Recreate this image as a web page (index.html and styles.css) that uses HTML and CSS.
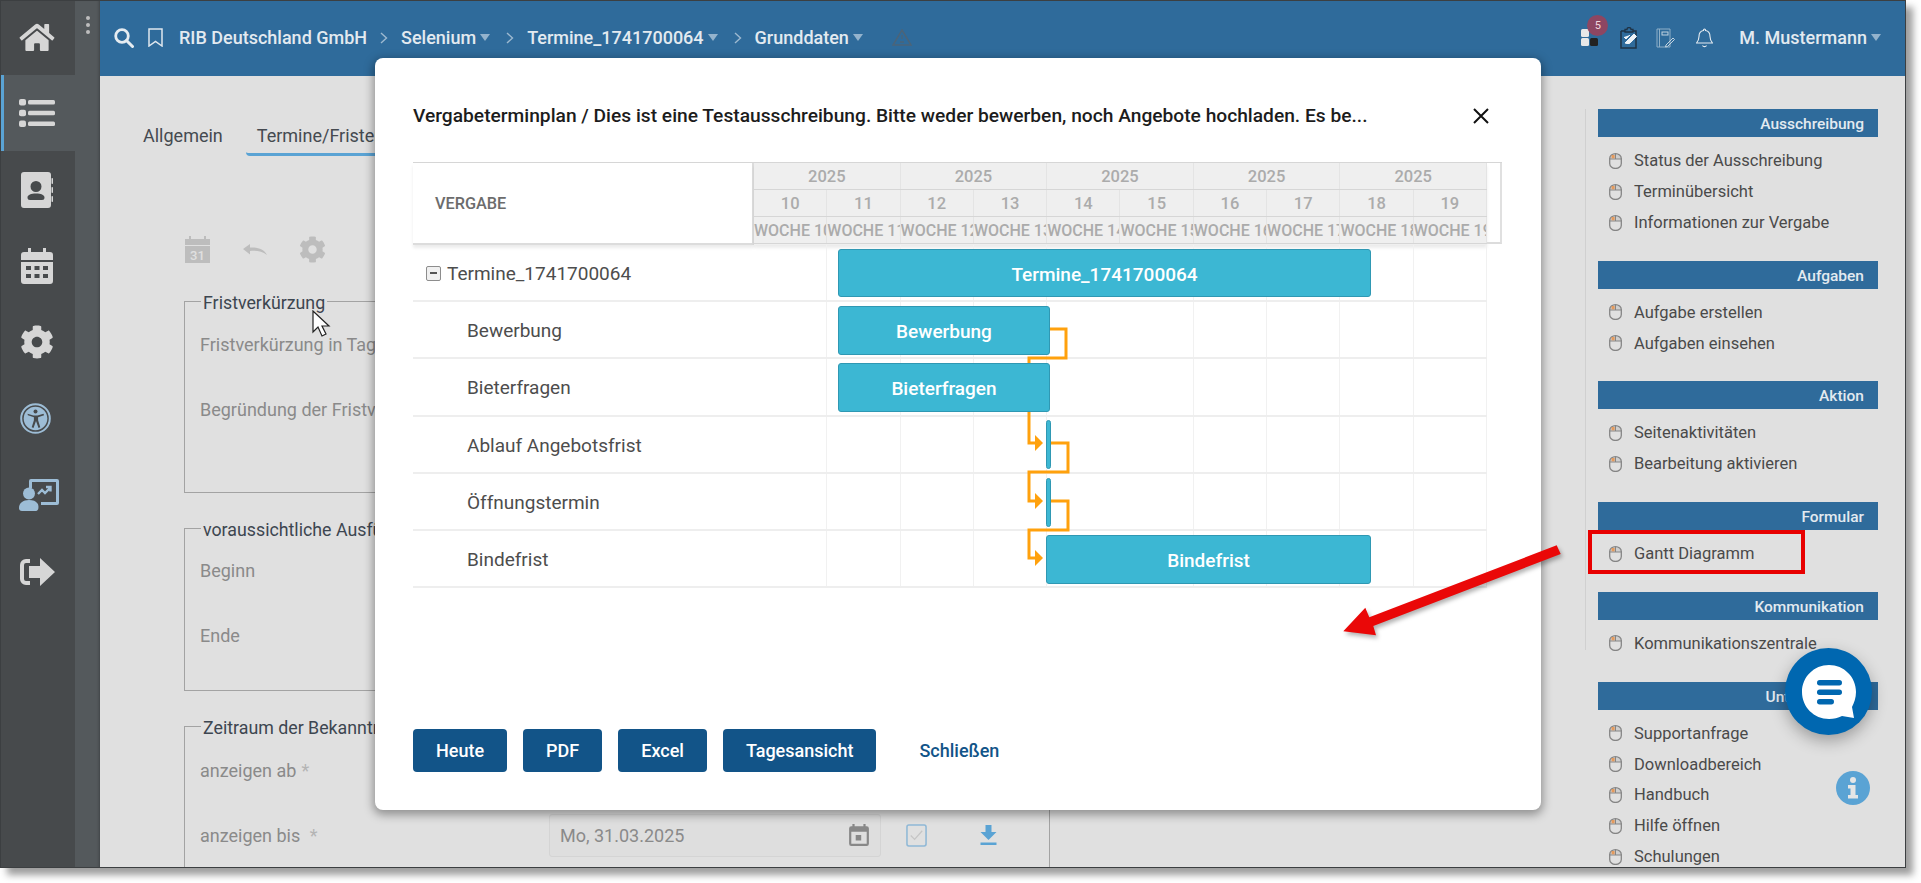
FILE: index.html
```html
<!DOCTYPE html>
<html lang="de">
<head>
<meta charset="utf-8">
<title>Vergabeterminplan</title>
<link rel="stylesheet" href="styles.css">
</head>
<body>
<svg class="defs" width="0" height="0" aria-hidden="true">
  <symbol id="mouse" viewBox="0 0 13 16">
    <path d="M.7 6a5.800 5.300 0 0 1 11.600 0z" fill="#cfcfcf"/>
    <path d="M.7 5.500a5.800 4.800 0 0 1 11.600 0v5a5.800 5 0 0 1-11.600 0z" fill="none" stroke="#858585" stroke-width="1.300"/>
    <path d="M.7 6h11.600M6.500 .8V6" fill="none" stroke="#858585" stroke-width="1"/>
    <rect x="2.600" y="2" width="3" height="3.300" fill="#e59a5c"/>
  </symbol>
</svg>
<div class="frame">
  <nav class="rail">
    <div class="rail-icons">
      <a class="rail-item"><svg class="ico-home" viewBox="0 0 576 512"><path d="M280.37 148.26L96 300.11V464a16 16 0 0 0 16 16l112.06-.29a16 16 0 0 0 15.92-16V368a16 16 0 0 1 16-16h64a16 16 0 0 1 16 16v95.64a16 16 0 0 0 16 16.05L464 480a16 16 0 0 0 16-16V300L295.67 148.26a12.19 12.19 0 0 0-15.3 0zM571.6 251.47L488 182.56V44.05a12 12 0 0 0-12-12h-56a12 12 0 0 0-12 12v72.61L318.47 43a48 48 0 0 0-61 0L4.34 251.47a12 12 0 0 0-1.6 16.9l25.5 31A12 12 0 0 0 45.15 301l235.22-193.74a12.19 12.19 0 0 1 15.3 0L530.9 301a12 12 0 0 0 16.9-1.6l25.5-31a12 12 0 0 0-1.7-16.93z"/></svg></a>
      <a class="rail-item rail-active"><svg class="ico-36" viewBox="0 0 36 28"><rect x="0" y="0" width="7" height="6.500" rx="2"/><rect x="0" y="10.700" width="7" height="6.500" rx="2"/><rect x="0" y="21.500" width="7" height="6.500" rx="2"/><rect x="9" y="1" width="27" height="4.500" rx="1.500"/><rect x="9" y="11.700" width="27" height="4.500" rx="1.500"/><rect x="9" y="22.500" width="27" height="4.500" rx="1.500"/></svg></a>
      <a class="rail-item"><svg class="ico-32" viewBox="0 0 32 36"><path fill-rule="evenodd" d="M3 0h24a3 3 0 0 1 3 3v30a3 3 0 0 1-3 3H3a3 3 0 0 1-3-3V3a3 3 0 0 1 3-3zm12 9a5.500 5.500 0 1 0 0 11 5.500 5.500 0 0 0 0-11zm-6 19h12a2.500 2.500 0 0 0 2.500-2.500C23.500 23 20 21.500 15 21.500S6.500 23 6.500 25.500A2.500 2.500 0 0 0 9 28z"/><rect x="30.500" y="6" width="1.500" height="6" rx=".7"/><rect x="30.500" y="15" width="1.500" height="6" rx=".7"/><rect x="30.500" y="24" width="1.500" height="6" rx=".7"/></svg></a>
      <a class="rail-item"><svg class="ico-32" viewBox="0 0 32 36"><path fill-rule="evenodd" d="M7 0h3v4h12V0h3v4h4a3 3 0 0 1 3 3v5H0V7a3 3 0 0 1 3-3h4zM0 14h32v19a3 3 0 0 1-3 3H3a3 3 0 0 1-3-3zm5 4v4h5v-4zm8.500 0v4h5v-4zm8.500 0v4h5v-4zM5 26v4h5v-4zm8.500 0v4h5v-4zm8.500 0v4h5v-4z"/></svg></a>
      <a class="rail-item"><svg class="ico-34" viewBox="0 0 512 512"><path d="M487.4 315.7l-42.6-24.6c4.3-23.2 4.3-47 0-70.2l42.6-24.6c4.9-2.8 7.1-8.6 5.5-14-11.1-35.6-30-67.8-54.7-94.6-3.8-4.1-10-5.1-14.8-2.3L380.8 110c-17.9-15.4-38.5-27.3-60.8-35.1V25.8c0-5.6-3.9-10.5-9.4-11.7-36.7-8.2-74.3-7.8-109.2 0-5.5 1.2-9.4 6.1-9.4 11.7V75c-22.2 7.9-42.8 19.8-60.8 35.1L88.7 85.5c-4.9-2.8-11-1.9-14.8 2.3-24.7 26.7-43.6 58.9-54.7 94.6-1.7 5.4.6 11.2 5.5 14L67.3 221c-4.3 23.2-4.3 47 0 70.2l-42.6 24.6c-4.9 2.8-7.1 8.6-5.5 14 11.1 35.6 30 67.8 54.7 94.6 3.8 4.1 10 5.1 14.8 2.3l42.6-24.6c17.9 15.4 38.5 27.3 60.8 35.1v49.2c0 5.6 3.9 10.5 9.4 11.7 36.7 8.2 74.3 7.8 109.2 0 5.5-1.2 9.4-6.1 9.4-11.7v-49.2c22.2-7.9 42.8-19.8 60.8-35.1l42.6 24.6c4.9 2.8 11 1.9 14.8-2.3 24.7-26.7 43.6-58.9 54.7-94.6 1.5-5.5-.7-11.3-5.6-14.1zM256 336c-44.1 0-80-35.9-80-80s35.9-80 80-80 80 35.9 80 80-35.9 80-80 80z"/></svg></a>
      <a class="rail-item"><svg class="ico-blue ico-31" viewBox="0 0 31 31"><circle cx="15.500" cy="15.500" r="14.300" fill="none" stroke="#9dbdd6" stroke-width="2"/><circle cx="15.500" cy="15.500" r="11.800" fill="#9dbdd6"/><circle cx="15.500" cy="8.500" r="2" fill="#474a4c"/><path d="M7.500 10.800l6 1.700h4l6-1.700.6 1.500-6 2v3l2.200 7-1.800.6-2.500-6.900-2.500 6.900-1.800-.6 2.200-7v-3l-6-2z" fill="#474a4c"/></svg></a>
      <a class="rail-item"><svg class="ico-blue ico-40" viewBox="0 0 40 32"><path fill-rule="evenodd" d="M12 0h26a2 2 0 0 1 2 2v22a2 2 0 0 1-2 2H22v-3h15V3H13v6h-3V2a2 2 0 0 1 2-2z" fill="#9dbdd6"/><circle cx="10" cy="14.500" r="6" fill="#9dbdd6"/><path d="M0 29c0-5 4-8 10-8 4 0 7 1 8.500 3.500 1.500 1.500 1.500 7.500-1.500 7.500H3c-2 0-3-1-3-3z" fill="#9dbdd6"/><path d="M19 15l4-4 3 3 5-5M27 8h4.500v4.500" fill="none" stroke="#9dbdd6" stroke-width="2.400"/></svg></a>
      <a class="rail-item"><svg class="ico-36" viewBox="0 0 36 28"><path d="M11 3H7a4 4 0 0 0-4 4v14a4 4 0 0 0 4 4h4" fill="none" stroke="#d6d6d6" stroke-width="4"/><path d="M21 0l15 14-15 14v-8H10V8h11z"/></svg></a>
    </div>
    <div class="rail-handle"><span class="dot"></span><span class="dot"></span><span class="dot"></span></div>
  </nav>

  <div class="main">
    <header class="topbar">
      <svg class="tb-search" viewBox="0 0 20 20"><circle cx="8" cy="8" r="6.300" fill="none" stroke="#e6ecf1" stroke-width="2.800"/><path d="M12.500 12.500l6 6" stroke="#e6ecf1" stroke-width="3" stroke-linecap="round"/></svg>
      <svg class="tb-bookmark" viewBox="0 0 15 19"><path d="M1 1h13v17l-6.500-4.500L1 18z" fill="none" stroke="#dfe7ee" stroke-width="1.500"/></svg>
      <span class="crumb">RIB Deutschland GmbH</span>
      <svg class="chev" viewBox="0 0 8 12"><path d="M1 1l5.500 5L1 11" fill="none" stroke="#9db9d0" stroke-width="1.400"/></svg>
      <span class="crumb">Selenium</span><i class="caret"></i>
      <svg class="chev" viewBox="0 0 8 12"><path d="M1 1l5.500 5L1 11" fill="none" stroke="#9db9d0" stroke-width="1.400"/></svg>
      <span class="crumb">Termine_1741700064</span><i class="caret"></i>
      <svg class="chev" viewBox="0 0 8 12"><path d="M1 1l5.500 5L1 11" fill="none" stroke="#9db9d0" stroke-width="1.400"/></svg>
      <span class="crumb">Grunddaten</span><i class="caret"></i>
      <svg class="tb-warn" viewBox="0 0 20 17"><path d="M10 1l9 15H1z" fill="none" stroke="#4b6479" stroke-width="1.500"/><path d="M10 6v4M8 13h4" stroke="#4b6479" stroke-width="1.300"/></svg>
      <div class="tb-right">
        <div class="tb-apps">
          <span class="sq sq-light"></span><span class="sq sq-blue"></span><span class="sq sq-light"></span><span class="sq sq-dark"></span>
          <span class="badge">5</span>
        </div>
        <svg class="tb-clip" viewBox="0 0 20 22"><path d="M2 4h4M14 4h3v17H2V4" fill="none" stroke="#1f3346" stroke-width="1.500"/><path d="M6 5V2.500h2a2 2 0 0 1 4 0h2V5z" fill="none" stroke="#1f3346" stroke-width="1.300"/><path d="M5 10l2 2 4-4M6 16l9-9 2.500 2.500-7 7H8z" fill="#eef3f7" stroke="#eef3f7"/></svg>
        <svg class="tb-note" viewBox="0 0 19 20"><path d="M1 1h13v18H1zM3.500 1v18" fill="none" stroke="#8fb0c8" stroke-width="1"/><rect x="6" y="4" width="6" height="3" fill="none" stroke="#c2d3e0"/><path d="M10 17l7-7 1.500 1.500-7 7-2 .5z" fill="none" stroke="#c2d3e0"/></svg>
        <svg class="tb-bell" viewBox="0 0 17 20"><path d="M8.500 1a1 1 0 0 1 1 1v.5c3 .5 4.500 3 4.500 6 0 3 .8 4.500 2.500 6.500H.5C2.200 13 3 11.500 3 8.500c0-3 1.500-5.500 4.500-6V2a1 1 0 0 1 1-1z" fill="none" stroke="#e6ecf1" stroke-width="1.100"/><path d="M6.500 17.500c.8 1.500 3.200 1.500 4 0" fill="none" stroke="#e6ecf1" stroke-width="1.100"/></svg>
        <span class="crumb tb-user">M. Mustermann</span><i class="caret"></i>
      </div>
    </header>

    <div class="workspace">
      <section class="form-area">
        <div class="tabs">
          <a class="tab">Allgemein</a>
          <a class="tab tab-active">Termine/Fristen</a>
        </div>
        <div class="toolbar">
          <svg class="tool-cal" viewBox="0 0 25 27"><path fill-rule="evenodd" d="M4 0h2v3H19V0h2v3h4v6H0V3h4zM0 10h25v17H0z" fill="#bdbdbd"/><text class="cal-num" x="12.500" y="24" text-anchor="middle">31</text></svg>
          <svg class="tool-undo" viewBox="0 0 24 11"><path d="M0 5l7-5v3.500C14 3 21 5 24 11 19 7 14 6.500 7 7v3.500z" fill="#bdbdbd"/></svg>
          <svg class="tool-gear" viewBox="0 0 512 512"><path fill="#bdbdbd" d="M487.4 315.7l-42.6-24.6c4.3-23.2 4.3-47 0-70.2l42.6-24.6c4.9-2.8 7.1-8.6 5.5-14-11.1-35.6-30-67.8-54.7-94.6-3.8-4.1-10-5.1-14.8-2.3L380.8 110c-17.9-15.4-38.5-27.3-60.8-35.1V25.8c0-5.6-3.9-10.5-9.4-11.7-36.7-8.2-74.3-7.8-109.2 0-5.5 1.2-9.4 6.1-9.4 11.7V75c-22.2 7.9-42.8 19.8-60.8 35.1L88.7 85.5c-4.9-2.8-11-1.9-14.8 2.3-24.7 26.7-43.6 58.9-54.7 94.6-1.7 5.4.6 11.2 5.5 14L67.3 221c-4.3 23.2-4.3 47 0 70.2l-42.6 24.6c-4.9 2.8-7.1 8.6-5.5 14 11.1 35.6 30 67.8 54.7 94.6 3.8 4.1 10 5.1 14.8 2.3l42.6-24.6c17.9 15.4 38.5 27.3 60.8 35.1v49.2c0 5.6 3.9 10.5 9.4 11.7 36.7 8.2 74.3 7.8 109.2 0 5.5-1.2 9.4-6.1 9.4-11.7v-49.2c22.2-7.9 42.8-19.8 60.8-35.1l42.6 24.6c4.9 2.8 11 1.9 14.8-2.3 24.7-26.7 43.6-58.9 54.7-94.6 1.5-5.5-.7-11.3-5.6-14.1zM256 336c-44.1 0-80-35.9-80-80s35.9-80 80-80 80 35.9 80 80-35.9 80-80 80z"/></svg>
        </div>
        <fieldset class="group group-a">
          <legend>Fristverkürzung</legend>
          <div class="field">Fristverkürzung in Tagen</div>
          <div class="field">Begründung der Fristverkürzung</div>
        </fieldset>
        <fieldset class="group group-b">
          <legend>voraussichtliche Ausführung</legend>
          <div class="field">Beginn</div>
          <div class="field">Ende</div>
        </fieldset>
        <fieldset class="group group-c">
          <legend>Zeitraum der Bekanntmachung</legend>
          <div class="field">anzeigen ab <span class="req">*</span></div>
          <div class="field">
            <span class="field-label">anzeigen bis <span class="req">*</span></span>
            <span class="date-input">Mo, 31.03.2025
              <svg class="date-ico" viewBox="0 0 18 20"><path fill-rule="evenodd" d="M3 0h2v2h8V0h2v2h1a2 2 0 0 1 2 2v14a2 2 0 0 1-2 2H2a2 2 0 0 1-2-2V4a2 2 0 0 1 2-2h1zM2 7v11h14V7zm4 3h5v5H6z" fill="#888"/></svg>
            </span>
            <svg class="check-ico" viewBox="0 0 22 24"><rect x="1" y="1" width="20" height="22" rx="2" fill="none" stroke="#8fb8d6" stroke-width="1.600"/><path d="M5 12l4 4 8-9" fill="none" stroke="#c5c5c5" stroke-width="1.300"/></svg>
            <svg class="dl-ico" viewBox="0 0 16 20"><path d="M5 0h6v7h5l-8 8-8-8h5zM0 17.500h16V20H0z" fill="#5aa3d4"/></svg>
          </div>
        </fieldset>
      </section>

      <aside class="side-panel">
        <div class="panel-lined">
          <div class="panel-sec">
            <h3 class="panel-head">Ausschreibung</h3>
            <ul class="panel-list">
              <li><svg class="m"><use href="#mouse"/></svg>Status der Ausschreibung</li>
              <li><svg class="m"><use href="#mouse"/></svg>Terminübersicht</li>
              <li><svg class="m"><use href="#mouse"/></svg>Informationen zur Vergabe</li>
            </ul>
          </div>
          <div class="panel-sec">
            <h3 class="panel-head">Aufgaben</h3>
            <ul class="panel-list">
              <li><svg class="m"><use href="#mouse"/></svg>Aufgabe erstellen</li>
              <li><svg class="m"><use href="#mouse"/></svg>Aufgaben einsehen</li>
            </ul>
          </div>
          <div class="panel-sec">
            <h3 class="panel-head">Aktion</h3>
            <ul class="panel-list">
              <li><svg class="m"><use href="#mouse"/></svg>Seitenaktivitäten</li>
              <li><svg class="m"><use href="#mouse"/></svg>Bearbeitung aktivieren</li>
            </ul>
          </div>
          <div class="panel-sec">
            <h3 class="panel-head">Formular</h3>
            <ul class="panel-list">
              <li><svg class="m"><use href="#mouse"/></svg>Gantt Diagramm</li>
            </ul>
          </div>
          <div class="panel-sec">
            <h3 class="panel-head">Kommunikation</h3>
            <ul class="panel-list">
              <li><svg class="m"><use href="#mouse"/></svg>Kommunikationszentrale</li>
            </ul>
          </div>
        </div>
        <div class="panel-plain">
          <h3 class="panel-head">Unterstützung</h3>
          <ul class="panel-list">
            <li><svg class="m"><use href="#mouse"/></svg>Supportanfrage</li>
            <li><svg class="m"><use href="#mouse"/></svg>Downloadbereich</li>
            <li><svg class="m"><use href="#mouse"/></svg>Handbuch</li>
            <li><svg class="m"><use href="#mouse"/></svg>Hilfe öffnen</li>
            <li><svg class="m"><use href="#mouse"/></svg>Schulungen</li>
          </ul>
        </div>
      </aside>
    </div>
  </div>

  <svg class="cursor" viewBox="0 0 19 28"><path d="M1 1v21l5-5 4 9 4-2-4-8h7z" fill="#fff" stroke="#222" stroke-width="1.200"/></svg>

  <div class="modal">
    <div class="modal-head">
      <h2 class="modal-title">Vergabeterminplan / Dies ist eine Testausschreibung. Bitte weder bewerben, noch Angebote hochladen. Es be...</h2>
      <svg class="modal-close" viewBox="0 0 16 16"><path d="M1 1l14 14M15 1L1 15" stroke="#111" stroke-width="2"/></svg>
    </div>

    <div class="gantt">
      <div class="gantt-header">
        <div class="gantt-title">VERGABE</div>
        <div class="scale">
          <div class="scale-row scale-year"><span>2025</span><span>2025</span><span>2025</span><span>2025</span><span>2025</span></div>
          <div class="scale-row scale-num"><span>10</span><span>11</span><span>12</span><span>13</span><span>14</span><span>15</span><span>16</span><span>17</span><span>18</span><span>19</span></div>
          <div class="scale-row scale-week"><span>WOCHE 10</span><span>WOCHE 11</span><span>WOCHE 12</span><span>WOCHE 13</span><span>WOCHE 14</span><span>WOCHE 15</span><span>WOCHE 16</span><span>WOCHE 17</span><span>WOCHE 18</span><span>WOCHE 19</span></div>
        </div>
        <div class="scale-gap"></div>
      </div>
      <div class="gantt-body">
        <div class="labels">
          <div class="label label-root"><span class="toggle"></span>Termine_1741700064</div>
          <div class="label">Bewerbung</div>
          <div class="label">Bieterfragen</div>
          <div class="label">Ablauf Angebotsfrist</div>
          <div class="label">Öffnungstermin</div>
          <div class="label">Bindefrist</div>
        </div>
        <div class="chart">
          <div class="chart-row"></div><div class="chart-row"></div><div class="chart-row"></div><div class="chart-row"></div><div class="chart-row"></div><div class="chart-row"></div>
          <svg class="links" viewBox="0 0 733 343">
            <path d="M296 85H312V114H275V199H285M297 199H314V228H275V257H285M297 257H314V286H275V314H285" fill="none" stroke="#ffa10d" stroke-width="3"/>
            <path d="M281 191l8 8-8 8zM281 249l8 8-8 8zM281 306l8 8-8 8z" fill="#ffa10d"/>
          </svg>
          <div class="bar bar-root">Termine_1741700064</div>
          <div class="bar bar-bew">Bewerbung</div>
          <div class="bar bar-bie">Bieterfragen</div>
          <div class="bar bar-m1"></div>
          <div class="bar bar-m2"></div>
          <div class="bar bar-bin">Bindefrist</div>
        </div>
      </div>
    </div>

    <div class="modal-foot">
      <button class="btn">Heute</button>
      <button class="btn">PDF</button>
      <button class="btn">Excel</button>
      <button class="btn">Tagesansicht</button>
      <button class="btn-link">Schließen</button>
    </div>
  </div>

  <div class="callout-box"></div>
  <svg class="callout-arrow" viewBox="1340 540 225 100"><path d="M1556.700 545.300L1560.700 554 1373.300 626 1376 635.300 1343.300 631.300 1365.300 607.700 1369.300 617.300z" fill="#ea0808"/></svg>

  <div class="chat">
    <svg class="chat-ico" viewBox="0 0 54 54"><path d="M27 0c15 0 27 12 27 27 0 6-2 11-4 15l2 11-12-2c-4 2-8 3-13 3C12 54 0 42 0 27S12 0 27 0z" fill="#fff"/><rect x="15" y="15" width="25" height="5.500" rx="2.700" fill="#0067b0"/><rect x="15" y="24.500" width="25" height="5.500" rx="2.700" fill="#0067b0"/><rect x="15" y="34" width="17" height="5.500" rx="2.700" fill="#0067b0"/></svg>
  </div>
  <div class="info">
    <svg class="info-ico" viewBox="0 0 12 22"><circle cx="6" cy="3" r="3" fill="#e6e6e6"/><path d="M1 8h7.500v10H11v3.500H1V18h2.500v-6.500H1z" fill="#e6e6e6"/></svg>
  </div>
</div>
</body>
</html>
```
FILE: styles.css
```css
* { box-sizing: border-box; }
html, body { margin: 0; height: 100%; overflow: hidden; background: #fff; }
body { font-family: Roboto, "Liberation Sans", sans-serif; color: #444; }
.defs { position: absolute; }

.frame {
  position: relative;
  display: flex;
  width: 1906px;
  height: 868px;
  border: 1px solid #3c3f41;
  background: #e0e0e0;
  box-shadow: 7px 7px 7px rgba(0, 0, 0, .38);
}

/* left rail */
.rail { display: flex; width: 99px; flex: none; }
.rail-icons { width: 74px; background: #474a4c; }
.rail-item { display: flex; align-items: center; justify-content: center; height: 76.400px; padding-right: 2px; fill: #d6d6d6; }
.rail-item:first-child { height: 74px; padding-bottom: 2px; }
.rail-active { background: #54595c; border-left: 3px solid #5aa3d4; padding-right: 5px; }
.rail-handle { display: flex; flex-direction: column; align-items: center; gap: 3px; width: 25px; padding-top: 15px; background: #54595c; box-shadow: inset -3px 0 3px -2px rgba(0, 0, 0, .25); }
.dot { width: 4px; height: 4px; border-radius: 50%; background: #bdbdbd; }
.ico-home { width: 36px; height: 31px; }
.ico-36 { width: 36px; height: 28px; }
.ico-32 { width: 32px; height: 36px; }
.ico-34 { width: 34px; height: 34px; }
.ico-31 { width: 31px; height: 31px; margin-right: 4px; }
.ico-40 { width: 40px; height: 32px; margin-left: 3px; }

/* top bar */
.main { display: flex; flex-direction: column; flex: 1; min-width: 0; }
.topbar { display: flex; align-items: center; flex: none; height: 75px; padding: 0 24px 2px 14px; background: #2f6b9b; }
.tb-search { width: 20px; height: 20px; margin-right: 14px; }
.tb-bookmark { width: 15px; height: 19px; margin-right: 16px; }
.crumb { font-size: 18px; font-weight: 500; color: #e3eaf0; white-space: nowrap; }
.caret { width: 0; height: 0; margin-left: 4px; border-left: 5.500px solid transparent; border-right: 5.500px solid transparent; border-top: 7px solid #94b3cd; }
.chev { width: 8px; height: 12px; margin: 0 13px; }
.caret + .chev { margin-left: 16px; }
.tb-warn { width: 20px; height: 17px; margin-left: 29px; }
.tb-right { display: flex; align-items: center; margin-left: auto; }
.tb-apps { position: relative; display: grid; grid-template-columns: 8px 8px; gap: 1px; margin-right: 21px; }
.sq { width: 8px; height: 8px; border-radius: 1.500px; }
.sq-light { background: #e8e8e8; }
.sq-blue { background: #2f6b9b; }
.sq-dark { background: #222; }
.badge { position: absolute; top: -14px; left: 6px; width: 21px; height: 21px; border-radius: 50%; background: rgba(152, 66, 92, .9); color: #f2d7dd; font-size: 11px; line-height: 21px; text-align: center; }
.tb-clip { width: 20px; height: 22px; margin-right: 17px; }
.tb-note { width: 19px; height: 20px; margin-right: 21px; }
.tb-bell { width: 17px; height: 20px; margin-right: 26px; }

/* form behind the dialog */
.workspace { display: flex; flex: 1; min-height: 0; overflow: hidden; }
.form-area { flex: 1; min-width: 0; padding-left: 84px; }
.tabs { display: flex; gap: 12px; margin: 40px 0 0 -52px; height: 40px; }
.tab { height: 40px; padding: 0 11px; font-size: 18px; line-height: 40px; color: #454a50; }
.tab-active { border-bottom: 3px solid #5aa3d4; border-radius: 0 0 0 4px; }
.toolbar { display: flex; align-items: center; height: 27px; margin: 80px 0 26.500px 1px; }
.tool-cal { width: 25px; height: 27px; margin-right: 33px; }
.cal-num { font-size: 13px; font-weight: 500; fill: #e0e0e0; font-family: Roboto, sans-serif; }
.tool-undo { width: 24px; height: 11px; margin-right: 32px; }
.tool-gear { width: 27px; height: 27px; }
.group { width: 866px; margin: 0 0 23.500px; padding: 0 15px; border: 1px solid #a3a3a3; }
.group legend { margin-left: 1px; padding: 3px 2px 0; font-size: 17.800px; line-height: 20px; color: #3d4650; }
.group-a { height: 203.500px; }
.group-a legend { margin-bottom: -1px; }
.group-b { height: 174.500px; }
.group-b legend { margin-bottom: -2px; }
.group-c { height: 220px; margin-bottom: 0; }
.field { display: flex; align-items: center; height: 65px; font-size: 18px; color: #8a8a8a; white-space: nowrap; }
.req { margin-left: 5px; color: #b4b4b4; }
.field-label { width: 349px; }
.date-input { display: flex; align-items: center; justify-content: space-between; width: 332px; height: 43px; padding: 0 11px 0 10px; border: 1px solid #d4d4d4; border-radius: 3px; background: #dedede; }
.date-ico { width: 20px; height: 22px; }
.check-ico { width: 21px; height: 23px; margin-left: 25px; }
.dl-ico { width: 17px; height: 20px; margin-left: 53px; }

/* right panel */
.side-panel { flex: none; width: 320px; padding-top: 33px; }
.panel-lined { height: 541px; padding-left: 12px; border-left: 1px solid #d0d0d0; }
.panel-sec { margin-bottom: 22.700px; }
.panel-plain { margin: 32px 0 0 13px; }
.panel-head { width: 280px; height: 28px; margin: 0; padding: 2px 14px 0 0; background: #2f6b9b; color: #e3eaf0; font-size: 15.500px; font-weight: 500; line-height: 26px; text-align: right; }
.panel-list { margin: 8px 0 0; padding: 0; list-style: none; }
.panel-list li { display: flex; align-items: center; height: 31px; padding-left: 11px; font-size: 16.500px; color: #4a4a4a; white-space: nowrap; }
.panel-plain .panel-list li { height: 30.800px; }
.m { width: 13px; height: 16px; margin-right: 12px; flex: none; }

/* pointer */
.cursor { position: absolute; left: 311px; top: 309px; width: 19px; height: 28px; }

/* dialog */
.modal { position: absolute; left: 374px; top: 57px; display: flex; flex-direction: column; width: 1166px; height: 752px; padding: 0 38px 38px; border-radius: 8px; background: #fff; box-shadow: 0 3px 10px 2px rgba(0, 0, 0, .35); }
.modal-head { display: flex; align-items: center; justify-content: space-between; flex: none; height: 104px; padding: 11px 14px 0 0; }
.modal-title { margin: 0; font-size: 19.200px; font-weight: 500; color: #1c1c1c; white-space: nowrap; }
.modal-close { width: 16px; height: 16px; }

/* gantt */
.gantt { width: 1089px; flex: none; }
.gantt-header { display: flex; height: 83px; border-top: 1px solid #d6d6d6; }
.gantt-title { width: 341px; padding-left: 22px; border-right: 2px solid #dcdcdc; border-bottom: 2px solid #dcdcdc; font-size: 16.300px; font-weight: 500; line-height: 82px; color: #6c6c6c; box-shadow: 0 3px 3px rgba(0, 0, 0, .08); }
.scale { width: 733px; background: #efefef; box-shadow: 0 3px 3px rgba(0, 0, 0, .08); }
.scale-row { display: flex; height: 27px; border-bottom: 1px solid #d6d6d6; color: #ababab; font-size: 16.500px; font-weight: 500; line-height: 27px; }
.scale-row span { flex: 1 1 0; min-width: 0; overflow: hidden; white-space: nowrap; text-align: center; border-right: 1px solid #e4e4e4; }
.scale-week span { text-align: left; font-size: 16px; }
.scale-gap { width: 15px; height: 81px; border-right: 2px solid #e0e0e0; border-bottom: 2px solid #dcdcdc; }
.gantt-body { display: flex; height: 343px; }
.labels { width: 341px; }
.label { display: flex; align-items: center; height: 57.200px; padding: 2px 0 0 54px; border-bottom: 2px solid #eee; font-size: 19px; color: #4d4d4d; }
.label-root { padding-left: 13px; }
.toggle { position: relative; width: 15px; height: 15px; margin-right: 6px; border: 1.500px solid #8d8d8d; border-radius: 2px; background: #f0f0f0; }
.toggle::after { content: ""; position: absolute; left: 2.500px; top: 5px; width: 7px; height: 2px; background: #555; }
.chart { position: relative; width: 733px; background-image: repeating-linear-gradient(to right, transparent 0 72.300px, #f1f1f1 72.300px 73.300px); }
.chart-row { height: 57.200px; border-bottom: 2px solid #eee; }
.links { position: absolute; left: 0; top: -1px; width: 733px; height: 343px; }
.bar { position: absolute; display: flex; align-items: center; justify-content: center; height: 49px; padding-top: 2px; border: 1px solid #2f98b3; border-radius: 3px; background: #3cb7d3; color: #fff; font-size: 19px; font-weight: 500; }
.bar-root { left: 84px; top: 4px; width: 533px; height: 48px; }
.bar-bew { left: 84px; top: 61px; width: 212px; }
.bar-bie { left: 84px; top: 118px; width: 212px; }
.bar-m1 { left: 292px; top: 175px; width: 5px; }
.bar-m2 { left: 292px; top: 233px; width: 5px; }
.bar-bin { left: 292px; top: 290px; width: 325px; }

.modal-foot { display: flex; align-items: center; gap: 16px; margin-top: auto; }
.btn { height: 43px; padding: 0 23px; border: 0; border-radius: 4px; background: #125488; color: #fff; font: 500 18px Roboto, sans-serif; }
.btn-link { margin-left: 27px; padding: 0; border: 0; background: none; color: #125488; font: 500 18px Roboto, sans-serif; }

/* annotations */
.callout-box { position: absolute; left: 1587px; top: 529px; width: 217px; height: 44px; border: 4px solid #e80000; }
.callout-arrow { position: absolute; left: 1339px; top: 539px; width: 225px; height: 100px; filter: drop-shadow(2px 3px 2px rgba(0, 0, 0, .3)); }

.chat { position: absolute; left: 1784px; top: 647px; display: flex; align-items: center; justify-content: center; width: 87px; height: 87px; border-radius: 50%; background: #0067b0; box-shadow: 0 6px 16px rgba(0, 0, 0, .3); }
.chat-ico { width: 54px; height: 54px; }
.info { position: absolute; left: 1835px; top: 770px; display: flex; align-items: center; justify-content: center; width: 34px; height: 34px; border-radius: 50%; background: #5aa3d4; }
.info-ico { width: 12px; height: 22px; }
```
